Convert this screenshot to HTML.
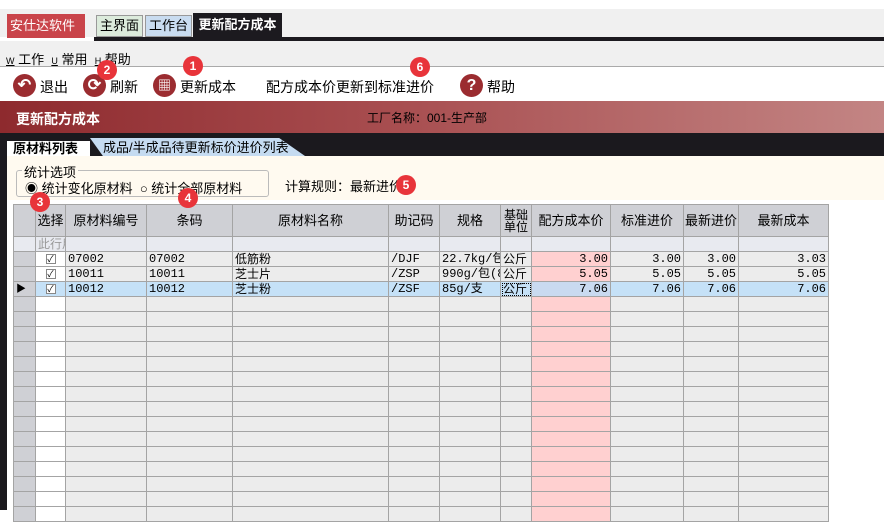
<!DOCTYPE html><html><head><meta charset="utf-8"><style>
*{margin:0;padding:0;box-sizing:border-box}
body{width:884px;height:510px;overflow:hidden;background:#fff;font-family:"Liberation Sans","Noto Sans CJK SC",sans-serif;font-size:13px;color:#000;position:relative}
.a{position:absolute}
.badge{position:absolute;width:20px;height:20px;border-radius:50%;background:#e8343a;color:#fff;font-size:12px;text-align:center;line-height:20px;font-weight:bold;z-index:5}
.ic{position:absolute;width:23px;height:23px;border-radius:50%;background:#9b2c30;color:#fff;text-align:center;line-height:23px;font-weight:bold;font-size:16px}
table{position:absolute;left:13px;top:204px;width:815px;border-collapse:collapse;table-layout:fixed;font-size:12px}
td{border:1px solid #a4a4a4;height:15px;background:#ececec;padding:0 2px;white-space:nowrap;overflow:hidden;line-height:13px}
tr.h td{height:32px;background:#cfd0d5;text-align:center;font-size:13px;padding:0}
tr.f td{background:#e8eaf0;color:#999}
td.r{background:#cfd0d5}
td.c{background:#fff;text-align:center}
td.p{background:#ffd0d0}
.n{text-align:right;font-family:"Liberation Mono","Noto Sans CJK SC",monospace}
.m{font-family:"Liberation Mono","Noto Sans CJK SC",monospace}
tr.s td{background:#c5e1f7}
tr.s td.r{background:#cfd0d5}
tr.s td.p{background:#c9daf0}
.cb{display:inline-block;width:10px;height:10px;border:1px solid #888;background:#fff;font-size:9px;line-height:8px;vertical-align:middle}
</style></head><body>
<div class="a" style="left:0;top:0;width:884px;height:9px;background:#fff"></div>
<div class="a" style="left:0;top:9px;width:884px;height:28px;background:#f0f0f0"></div>
<div class="a" style="left:7px;top:14px;width:78px;height:24px;background:#c9444a;color:#fff;line-height:24px;padding-left:3px;font-size:13px">安仕达软件 ▾</div>
<div class="a" style="left:96px;top:15px;width:47px;height:22px;background:#dcebdc;border:1px solid #999;text-align:center;line-height:20px">主界面</div>
<div class="a" style="left:145px;top:15px;width:47px;height:22px;background:#c9dcf0;border:1px solid #999;text-align:center;line-height:20px">工作台</div>
<div class="a" style="left:193px;top:13px;width:89px;height:24px;background:#1c1a1f;color:#fff;font-weight:bold;text-align:center;line-height:24px">更新配方成本</div>
<div class="a" style="left:94px;top:37px;width:790px;height:4px;background:#1c1a1f"></div>
<div class="a" style="left:0;top:41px;width:884px;height:26px;background:#f0f0f0;border-bottom:1px solid #aaa"></div>
<div class="a" style="left:6px;top:49px;font-size:13px"><span style="font-size:9px;text-decoration:underline">W</span> 工作 &nbsp;<span style="font-size:9px;text-decoration:underline">U</span> 常用 &nbsp;<span style="font-size:9px;text-decoration:underline">H</span> 帮助</div>
<div class="ic" style="left:13px;top:74px">↶</div><div class="a" style="left:40px;top:77px;font-size:14px">退出</div>
<div class="ic" style="left:83px;top:74px">⟳</div><div class="a" style="left:110px;top:77px;font-size:14px">刷新</div>
<div class="ic" style="left:153px;top:74px;font-size:13px">▦</div><div class="a" style="left:180px;top:77px;font-size:14px">更新成本</div>
<div class="a" style="left:266px;top:77px;font-size:14px">配方成本价更新到标准进价</div>
<div class="ic" style="left:460px;top:74px">?</div><div class="a" style="left:487px;top:77px;font-size:14px">帮助</div>
<div class="badge" style="left:183px;top:56px">1</div>
<div class="badge" style="left:97px;top:60px">2</div>
<div class="badge" style="left:410px;top:57px">6</div>
<div class="a" style="left:0;top:101px;width:884px;height:32px;background:linear-gradient(90deg,#8e2a2e,#a84e50 45%,#c38584)"></div>
<div class="a" style="left:16px;top:109px;color:#fff;font-weight:bold;font-size:14px">更新配方成本</div>
<div class="a" style="left:367px;top:109px;font-size:12px">工厂名称：001-生产部</div>
<div class="a" style="left:0;top:133px;width:884px;height:23px;background:#1b191e"></div>
<div class="a" style="left:0;top:133px;width:7px;height:377px;background:#1b191e"></div>
<div class="a" style="left:7px;top:141px;width:83px;height:16px;background:#fff;font-weight:bold;padding-left:6px;line-height:16px">原材料列表</div>
<div class="a" style="left:90px;top:138px;width:215px;height:18px;background:#c5dbf1;clip-path:polygon(0 0,88% 0,100% 100%,6% 100%);padding-left:13px;line-height:19px">成品/半成品待更新标价进价列表</div>
<div class="a" style="left:7px;top:156px;width:877px;height:44px;background:#fffaf0"></div>
<div class="a" style="left:16px;top:170px;width:253px;height:27px;border:1px solid #bbb;border-radius:3px"></div>
<div class="a" style="left:22px;top:162px;background:#fffaf0;padding:0 2px">统计选项</div>
<div class="a" style="left:25px;top:178px">◉ 统计变化原材料 &nbsp;○ 统计全部原材料</div>
<div class="a" style="left:285px;top:176px">计算规则：最新进价</div>
<div class="a" style="left:13px;top:200px;width:871px;height:310px;background:#fff"></div>
<table>
<colgroup><col style="width:22px"><col style="width:30px"><col style="width:81px"><col style="width:86px"><col style="width:156px"><col style="width:51px"><col style="width:61px"><col style="width:31px"><col style="width:79px"><col style="width:73px"><col style="width:55px"><col style="width:90px"></colgroup>
<tr class="h"><td></td><td>选择</td><td>原材料编号</td><td>条码</td><td>原材料名称</td><td>助记码</td><td>规格</td><td style="line-height:12px;font-size:12px;white-space:normal">基础单位</td><td>配方成本价</td><td>标准进价</td><td>最新进价</td><td>最新成本</td></tr>
<tr class="f"><td class="r"></td><td>此行用</td><td></td><td></td><td></td><td></td><td></td><td></td><td></td><td></td><td></td><td></td></tr>
<tr><td class="r"></td><td class="c"><span class="cb">✓</span></td><td class="m">07002</td><td class="m">07002</td><td>低筋粉</td><td class="m">/DJF</td><td class="m">22.7kg/包</td><td>公斤</td><td class="p n">3.00</td><td class="n">3.00</td><td class="n">3.00</td><td class="n">3.03</td></tr>
<tr><td class="r"></td><td class="c"><span class="cb">✓</span></td><td class="m">10011</td><td class="m">10011</td><td>芝士片</td><td class="m">/ZSP</td><td class="m">990g/包(80</td><td>公斤</td><td class="p n">5.05</td><td class="n">5.05</td><td class="n">5.05</td><td class="n">5.05</td></tr>
<tr class="s"><td class="r" style="font-size:10px">▶</td><td class="c"><span class="cb">✓</span></td><td class="m">10012</td><td class="m">10012</td><td>芝士粉</td><td class="m">/ZSF</td><td class="m">85g/支</td><td style="outline:1px dotted #000;outline-offset:-2px">公斤</td><td class="p n">7.06</td><td class="n">7.06</td><td class="n">7.06</td><td class="n">7.06</td></tr>
<tr><td class="r"></td><td class="c"></td><td></td><td></td><td></td><td></td><td></td><td></td><td class="p"></td><td></td><td></td><td></td></tr>
<tr><td class="r"></td><td class="c"></td><td></td><td></td><td></td><td></td><td></td><td></td><td class="p"></td><td></td><td></td><td></td></tr>
<tr><td class="r"></td><td class="c"></td><td></td><td></td><td></td><td></td><td></td><td></td><td class="p"></td><td></td><td></td><td></td></tr>
<tr><td class="r"></td><td class="c"></td><td></td><td></td><td></td><td></td><td></td><td></td><td class="p"></td><td></td><td></td><td></td></tr>
<tr><td class="r"></td><td class="c"></td><td></td><td></td><td></td><td></td><td></td><td></td><td class="p"></td><td></td><td></td><td></td></tr>
<tr><td class="r"></td><td class="c"></td><td></td><td></td><td></td><td></td><td></td><td></td><td class="p"></td><td></td><td></td><td></td></tr>
<tr><td class="r"></td><td class="c"></td><td></td><td></td><td></td><td></td><td></td><td></td><td class="p"></td><td></td><td></td><td></td></tr>
<tr><td class="r"></td><td class="c"></td><td></td><td></td><td></td><td></td><td></td><td></td><td class="p"></td><td></td><td></td><td></td></tr>
<tr><td class="r"></td><td class="c"></td><td></td><td></td><td></td><td></td><td></td><td></td><td class="p"></td><td></td><td></td><td></td></tr>
<tr><td class="r"></td><td class="c"></td><td></td><td></td><td></td><td></td><td></td><td></td><td class="p"></td><td></td><td></td><td></td></tr>
<tr><td class="r"></td><td class="c"></td><td></td><td></td><td></td><td></td><td></td><td></td><td class="p"></td><td></td><td></td><td></td></tr>
<tr><td class="r"></td><td class="c"></td><td></td><td></td><td></td><td></td><td></td><td></td><td class="p"></td><td></td><td></td><td></td></tr>
<tr><td class="r"></td><td class="c"></td><td></td><td></td><td></td><td></td><td></td><td></td><td class="p"></td><td></td><td></td><td></td></tr>
<tr><td class="r"></td><td class="c"></td><td></td><td></td><td></td><td></td><td></td><td></td><td class="p"></td><td></td><td></td><td></td></tr>
<tr><td class="r"></td><td class="c"></td><td></td><td></td><td></td><td></td><td></td><td></td><td class="p"></td><td></td><td></td><td></td></tr>
</table>
<div class="badge" style="left:30px;top:192px">3</div>
<div class="badge" style="left:178px;top:188px">4</div>
<div class="badge" style="left:396px;top:175px">5</div>
</body></html>
